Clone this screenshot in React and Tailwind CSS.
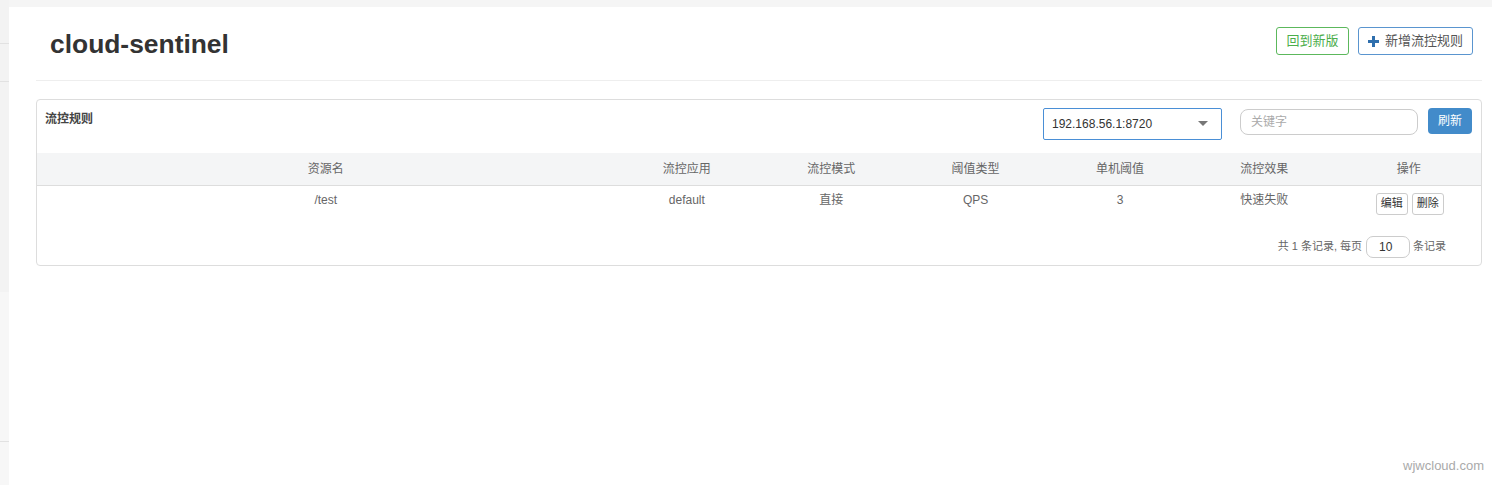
import React from "react"

const font = { fontFamily: '"Liberation Sans", Arial, "Noto Sans CJK SC", sans-serif' }

const columns = ["资源名", "流控应用", "流控模式", "阈值类型", "单机阈值", "流控效果", "操作"]

const rules = [
  { resource: "/test", app: "default", mode: "直接", grade: "QPS", count: "3", effect: "快速失败" },
]

function Sidebar() {
  return (
    <aside className="w-[9px] shrink-0 flex flex-col bg-[#f3f3f3]">
      <div className="h-[44px] border-b border-[#e2e2e2]" />
      <div className="h-[38px] border-b border-[#e2e2e2]" />
      <div className="h-[210px]" />
      <div className="h-[150px] bg-[#f7f7f7] border-b border-[#e2e2e2]" />
      <div className="flex-1 bg-[#f7f7f7]" />
    </aside>
  )
}

function Header() {
  return (
    <header className="flex items-center justify-between h-[74px] border-b border-[#eeeeee] pl-[14px] pr-[9px]">
      <h1 className="text-[26.4px] font-bold text-[#333] pt-[3px]">cloud-sentinel</h1>
      <div className="flex items-center gap-[9px] pb-[5px]">
        <button className="h-[28px] w-[73px] rounded-[3px] border border-[#5cb85c] text-[13px] text-[#4cae4c] bg-white">
          回到新版
        </button>
        <button className="h-[28px] w-[115px] rounded-[3px] border border-[#5a95cf] text-[13px] text-[#555] bg-white flex items-center justify-center gap-[6px]">
          <svg width="11" height="11" viewBox="0 0 11 11">
            <path d="M4 0h3v4h4v3H7v4H4V7H0V4h4z" fill="#2f6fad" />
          </svg>
          新增流控规则
        </button>
      </div>
    </header>
  )
}

function Toolbar() {
  return (
    <div className="flex items-start justify-between h-[53px] pl-[8px] pr-[9px] pt-[8px]">
      <div className="text-[12px] font-bold text-[#444] pt-[2px]">流控规则</div>
      <div className="flex items-start">
        <div className="w-[179px] h-[32px] border border-[#4a8fd6] rounded-[2px] flex items-center justify-between pl-[8px] pr-[13px] text-[12px] text-[#333]">
          <span>192.168.56.1:8720</span>
          <svg width="10" height="6" viewBox="0 0 10 6">
            <path d="M0 0h10L5 5z" fill="#777" />
          </svg>
        </div>
        <div className="ml-[18px] mt-[1px] w-[178px] h-[26px] border border-[#cccccc] rounded-[8px] flex items-center px-[10px] text-[12px] text-[#aaa]">
          关键字
        </div>
        <button className="ml-[10px] w-[44px] h-[26px] rounded-[4px] bg-[#428bca] text-white text-[12px]">刷新</button>
      </div>
    </div>
  )
}

function RulesTable() {
  return (
    <table className="w-full table-fixed border-collapse text-[12px] text-[#666]">
      <colgroup>
        <col className="w-[40%]" />
        {columns.slice(1).map((c) => (
          <col key={c} className="w-[10%]" />
        ))}
      </colgroup>
      <thead>
        <tr className="h-[32px] bg-[#f4f5f6] border-b border-[#dddddd]">
          {columns.map((c) => (
            <th key={c} className="font-normal text-center">{c}</th>
          ))}
        </tr>
      </thead>
      <tbody>
        {rules.map((r) => (
          <tr key={r.resource} className="align-top">
            <td className="text-center pt-[6px] leading-[16px]">{r.resource}</td>
            <td className="text-center pt-[6px] leading-[16px]">{r.app}</td>
            <td className="text-center pt-[6px] leading-[16px]">{r.mode}</td>
            <td className="text-center pt-[6px] leading-[16px]">{r.grade}</td>
            <td className="text-center pt-[6px] leading-[16px]">{r.count}</td>
            <td className="text-center pt-[6px] leading-[16px]">{r.effect}</td>
            <td className="pt-[7px] pb-[7px]">
              <div className="flex justify-center gap-[4px] pl-[2px]">
                <button className="w-[32px] h-[22px] border border-[#cccccc] rounded-[3px] text-[11px] text-[#333] bg-white">编辑</button>
                <button className="w-[32px] h-[22px] border border-[#cccccc] rounded-[3px] text-[11px] text-[#333] bg-white">删除</button>
              </div>
            </td>
          </tr>
        ))}
      </tbody>
    </table>
  )
}

function Pager() {
  return (
    <div className="flex items-center justify-end pr-[35px] pt-[14px] pb-[7px] text-[11px] text-[#666]">
      <span>共 1 条记录, 每页</span>
      <div className="ml-[4px] w-[44px] h-[22px] border border-[#cccccc] rounded-[7px] flex items-center pl-[12px] text-[12px] text-[#333]">10</div>
      <span className="ml-[3px]">条记录</span>
    </div>
  )
}

export default function App() {
  return (
    <div className="relative flex min-h-[485px] bg-[#f5f5f5]" style={font}>
      <Sidebar />
      <main className="flex-1 mt-[7px] bg-white pl-[27px] pr-[10px]">
        <Header />
        <section className="mt-[18px] border border-[#dddddd] rounded-[4px] bg-white">
          <Toolbar />
          <RulesTable />
          <Pager />
        </section>
      </main>
      <div className="absolute right-[8px] bottom-[10px] text-[13px] text-[#aaa]">wjwcloud.com</div>
    </div>
  )
}
